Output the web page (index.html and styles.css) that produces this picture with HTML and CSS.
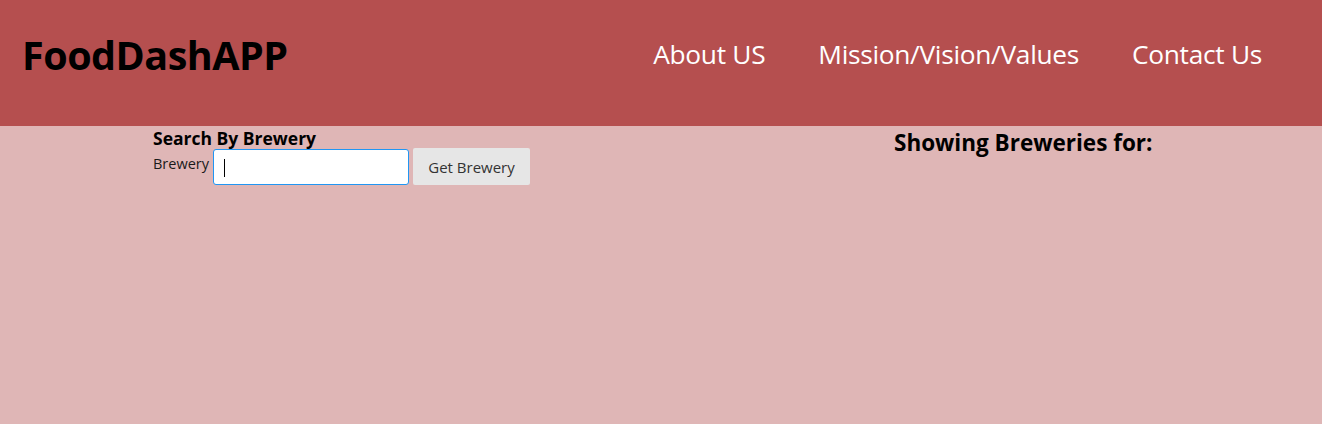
FILE: index.html
```html
<!DOCTYPE html>
<html>
<head>
<meta charset="utf-8">
<link rel="stylesheet" href="styles.css">
</head>
<body>
<header class="topbar">
  <h1 class="brand">FoodDashAPP</h1>
  <nav class="nav">
    <a class="nav-link" href="#">About US</a>
    <a class="nav-link" href="#">Mission/Vision/Values</a>
    <a class="nav-link" href="#">Contact Us</a>
  </nav>
</header>
<main class="content">
  <section class="search">
    <h3 class="search-title">Search By Brewery</h3>
    <div class="search-row">
      <label class="search-label" for="brewery">Brewery</label>
      <input class="search-input" id="brewery" type="text">
      <button class="search-btn" type="button">Get Brewery</button>
    </div>
  </section>
  <section class="results">
    <h2 class="results-title">Showing Breweries for:</h2>
  </section>
</main>
</body>
</html>
```
FILE: styles.css
```css
* { box-sizing: border-box; }
html, body {
  margin: 0;
  padding: 0;
  height: 100%;
}
body {
  font-family: "Open Sans", "Noto Sans", sans-serif;
  background: #dfb6b6;
  color: #000;
}
.topbar {
  height: 126px;
  background: #b54f4f;
  display: flex;
  align-items: center;
  justify-content: space-between;
  padding: 0 60px 0 22px;
}
.brand {
  margin: 0;
  font-size: 39.5px;
  font-weight: 700;
  letter-spacing: -0.5px;
  color: #000;
  transform: translateY(-8px);
}
.nav {
  display: flex;
  gap: 53px;
  transform: translateY(-9px);
}
.nav-link {
  color: #fff;
  text-decoration: none;
  font-size: 26.3px;
  letter-spacing: -0.3px;
}
.content {
  display: flex;
  padding: 0 0 0 153px;
}
.search {
  width: 741px;
}
.search-title {
  margin: 2px 0 0;
  font-size: 17.5px;
  font-weight: 700;
  line-height: 20px;
}
.search-row {
  display: flex;
  align-items: center;
  margin-top: 0;
}
.search-label {
  font-size: 14.5px;
  color: #1a1a1a;
  margin-right: 4px;
  align-self: flex-start;
  margin-top: 6px;
}
.search-input {
  width: 196px;
  height: 36px;
  border: 1px solid #2196f3;
  border-radius: 3px;
  background: linear-gradient(#000, #000) no-repeat 10px 9px / 1px 18px, #fff;
  outline: none;
  font-size: 15px;
  padding: 0 10px;
}
.search-btn {
  margin-left: 4px;
  width: 117px;
  height: 37px;
  border: none;
  border-radius: 2px;
  background: #e6e6e6;
  color: #333;
  font-family: inherit;
  font-size: 15px;
  padding-top: 2px;
}
.results-title {
  margin: 3px 0 0;
  font-size: 22.5px;
  font-weight: 700;
  line-height: 28px;
}
```
